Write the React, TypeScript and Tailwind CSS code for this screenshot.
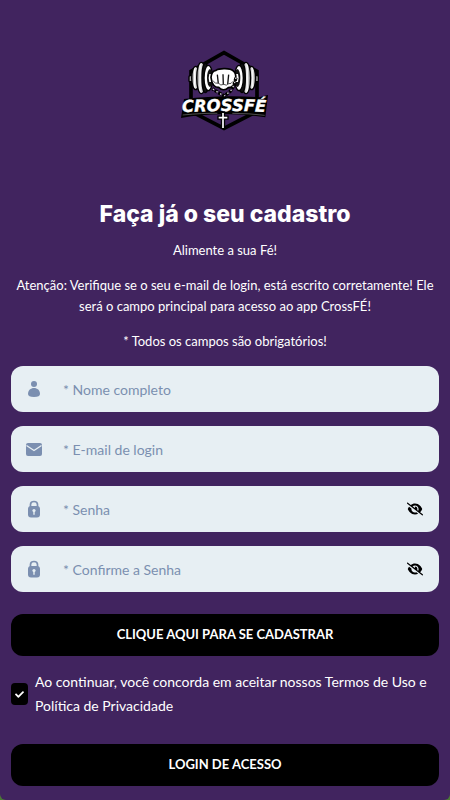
import React, { useState } from "react";
import { FaCheck } from "react-icons/fa";
import { FaEyeSlash, FaEye } from "react-icons/fa6";

const UserIcon = () => (
  <svg viewBox="0 0 18 18" className="h-[18px] w-[18px]" fill="currentColor" aria-hidden="true">
    <circle cx="9" cy="4" r="3" />
    <path d="M3 14c0-3.700 2.700-6 6-6s6 2.300 6 6c0 2-2 3-6 3s-6-1-6-3z" />
  </svg>
);

const MailIcon = () => (
  <svg viewBox="0 0 18 18" className="h-[18px] w-[18px]" fill="currentColor" aria-hidden="true">
    <rect x="1" y="3" width="16" height="13" rx="2" />
    <path d="M1.500 5.500L9 10.500l7.500-5" fill="none" stroke="#e7eff3" strokeWidth="1.300" />
  </svg>
);

const LockIcon = () => (
  <svg viewBox="0 0 18 18" className="h-[18px] w-[18px]" aria-hidden="true">
    <path d="M5.500 8V4.500C5.500 2.500 7 1.500 9 1.500s3.500 1 3.500 3V8" fill="none" stroke="currentColor" strokeWidth="1.700" />
    <rect x="3" y="6" width="12" height="11.500" rx="3" fill="currentColor" />
    <circle cx="9" cy="10.500" r="1.600" fill="#e7eff3" />
    <path d="M9 11v3.200" stroke="#e7eff3" strokeWidth="1.400" strokeLinecap="round" />
  </svg>
);

// Weight plates on one side of the dumbbell, drawn for the left and mirrored for the right
const Plates = () => (
  <g stroke="#000" strokeWidth="4">
    <rect x="57" y="107" width="12" height="18" rx="3" fill="#aaa" />
    <ellipse cx="77" cy="114" rx="12" ry="35" fill="url(#steel)" />
    <ellipse cx="94" cy="114" rx="14" ry="47" fill="url(#steel)" />
    <ellipse cx="106" cy="114" rx="10" ry="44" fill="#111" />
    <ellipse cx="115" cy="114" rx="13" ry="38" fill="#fff" />
    <ellipse cx="120" cy="114" rx="9" ry="27" fill="#111" stroke="none" />
    <path d="M118 102h12v24h-12q-4-12 0-24z" fill="#fff" stroke="none" />
  </g>
);

const Logo = () => (
  <svg viewBox="30 30 270 246" className="h-[82px] w-[90px]" role="img" aria-label="CrossFé">
    <defs>
      <linearGradient id="steel">
        <stop offset="0.100" stopColor="#888" />
        <stop offset="0.350" stopColor="#fff" />
        <stop offset="0.600" stopColor="#ccc" />
        <stop offset="1" stopColor="#777" />
      </linearGradient>
    </defs>
    <path d="M162 38l99 56v120l-99 51-99-51V94z" fill="none" stroke="#000" strokeWidth="11" />
    <Plates />
    <g transform="translate(322 0) scale(-1 1)">
      <Plates />
    </g>
    {/* Fist */}
    <path d="M123 112c1-12 6-20 15-21 10-7 44-7 52 2 6 4 8 12 7 22l-5 20c-4 7-12 8-17 8-9 9-22 8-29-1-11 1-21-8-23-30z" fill="#fff" stroke="#000" strokeWidth="5" />
    <path d="M142 104l3 27M159 103l1 31M176 104l-3 29" fill="none" stroke="#111" strokeWidth="4" />
    <path d="M128 121q8 13 17 8 7 10 16 4 9 6 14-2 9 2 14-7" fill="none" stroke="#555" strokeWidth="3" />
    {/* Rosary beads */}
    <path d="M198 113l-6 22-10 18-19 15-18-10-18-12" fill="none" stroke="#000" strokeWidth="10" strokeDasharray="10 3" />
    <path d="M198 113l-6 22-10 18-19 15-18-10-18-12" fill="none" stroke="#ddd" strokeWidth="4" strokeDasharray="4 9" />
    {/* Name banner */}
    <path d="M42 177q120-14 225-5l27-7-8 67q-62-11-124-9-62-1-129 11z" fill="#000" />
    <path id="name-line" d="M37 217q124-8 256-1" fill="none" />
    <text fill="#fff" stroke="#fff" strokeWidth="1" className="font-['DejaVu_Sans'] text-[49px] font-bold italic">
      <textPath href="#name-line">CROSSFÉ</textPath>
    </text>
    <path d="M38 225q62-6 104-5M187 220q50 0 97 6" fill="none" stroke="#777" strokeWidth="2" />
    <path d="M159 214v52M142 233h34" stroke="#000" strokeWidth="13" />
    <path d="M159 219v45M146 233h26" stroke="#fff" strokeWidth="5" />
  </svg>
);

type FieldProps = {
  id: string;
  label: string;
  type?: string;
  icon: React.ReactNode;
};

function Field({ id, label, type = "text", icon }: FieldProps) {
  const [visible, setVisible] = useState(false);
  const isPassword = type === "password";

  return (
    <div className="flex h-[46px] items-center rounded-xl bg-[#e7eff3] pr-4 pl-3.5 text-[#7b8fb0]">
      <label htmlFor={id} className="shrink-0">
        {icon}
      </label>
      <input
        id={id}
        type={isPassword && visible ? "text" : type}
        aria-label={label}
        placeholder={`* ${label}`}
        className="h-full min-w-0 flex-1 bg-transparent pl-5 text-sm text-slate-800 outline-none placeholder:text-[#7b8fb0]"
      />
      {isPassword && (
        <button
          type="button"
          onClick={() => setVisible(!visible)}
          aria-label={visible ? "Ocultar senha" : "Mostrar senha"}
          className="text-base text-black"
        >
          {visible ? <FaEye /> : <FaEyeSlash />}
        </button>
      )}
    </div>
  );
}

export default function App() {
  const [accepted, setAccepted] = useState(true);

  return (
    <div className="flex min-h-screen flex-col bg-[#4c7a35] pb-px font-['Lato',sans-serif] text-white">
      <main className="flex-1 rounded-b-md bg-[#41245f] px-[11px] pt-[50px] pb-3.5">
        <div className="flex justify-center">
          <Logo />
        </div>

        <div className="mt-[66px] text-center text-[13px] leading-[21px]">
          <h1 className="font-['Inter',sans-serif] text-[23px] leading-8 font-extrabold">Faça já o seu cadastro</h1>
          <p className="mt-2.5">Alimente a sua Fé!</p>
          <p className="mt-3.5">
            Atenção: Verifique se o seu e-mail de login, está escrito corretamente! Ele será o campo principal para
            acesso ao app CrossFÉ!
          </p>
          <p className="mt-3.5">* Todos os campos são obrigatórios!</p>
        </div>

        <form onSubmit={(e) => e.preventDefault()}>
          <div className="mt-3.5 flex flex-col gap-3.5">
            <Field id="name" label="Nome completo" icon={<UserIcon />} />
            <Field id="email" label="E-mail de login" type="email" icon={<MailIcon />} />
            <Field id="password" label="Senha" type="password" icon={<LockIcon />} />
            <Field id="confirm" label="Confirme a Senha" type="password" icon={<LockIcon />} />
          </div>

          <button type="submit" className="mt-[22px] h-[42px] w-full rounded-xl bg-black text-[13px] font-bold">
            CLIQUE AQUI PARA SE CADASTRAR
          </button>

          <div className="mt-3.5 flex items-center gap-[7px]">
            <span className="relative flex shrink-0">
              <input
                id="terms"
                type="checkbox"
                checked={accepted}
                onChange={(e) => setAccepted(e.target.checked)}
                className="h-[22px] w-[17px] appearance-none rounded-sm bg-black"
              />
              {accepted && (
                <FaCheck className="pointer-events-none absolute inset-0 m-auto h-[9px] w-[9px]" />
              )}
            </span>
            <label htmlFor="terms" className="text-sm leading-6">
              Ao continuar, você concorda em aceitar nossos Termos de Uso e Política de Privacidade
            </label>
          </div>

          <button type="button" className="mt-[26px] h-[42px] w-full rounded-xl bg-black text-[13px] font-bold">
            LOGIN DE ACESSO
          </button>
        </form>
      </main>
    </div>
  );
}
